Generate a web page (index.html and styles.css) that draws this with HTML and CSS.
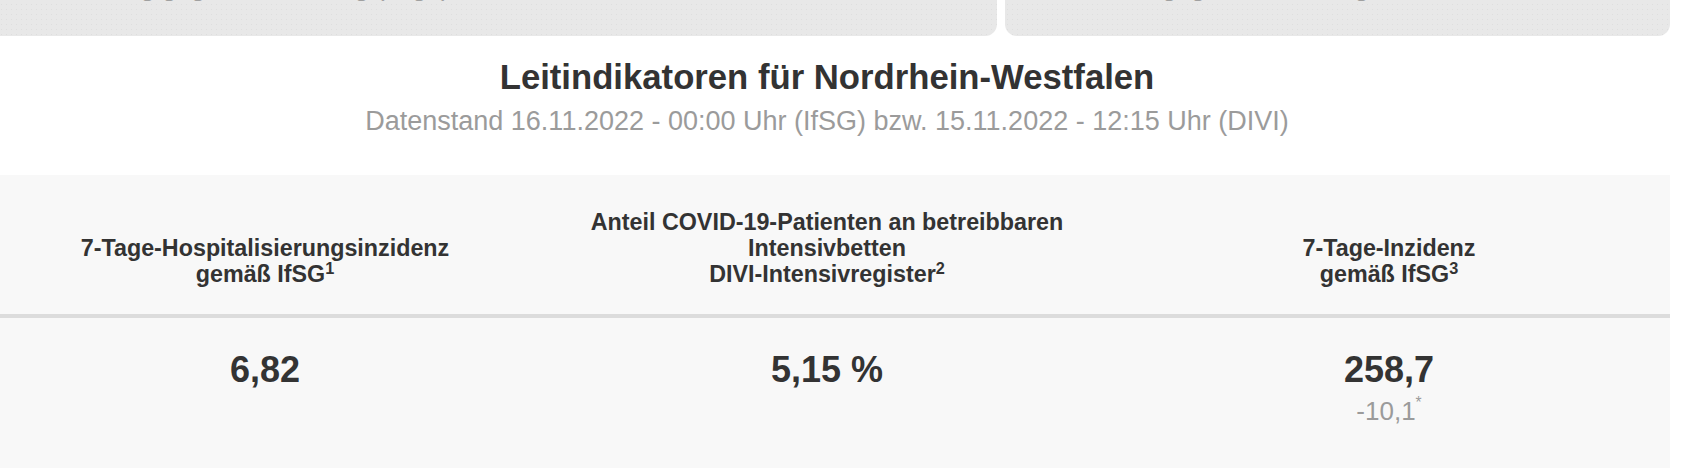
FILE: index.html
```html
<!DOCTYPE html>
<html lang="de">
<head>
<meta charset="utf-8">
<title>Leitindikatoren für Nordrhein-Westfalen</title>
<link rel="stylesheet" href="styles.css">
</head>
<body>
<div class="page">
  <div class="cards">
    <div class="card"><p class="card-text">Veränderung gegenüber Vortag (Tage)</p></div>
    <div class="card"><p class="card-text card-text-right">Stand gegenüber Vortag</p></div>
  </div>

  <header class="heading">
    <h2 class="title">Leitindikatoren für Nordrhein-Westfalen</h2>
    <p class="subtitle">Datenstand 16.11.2022 - 00:00 Uhr (IfSG) bzw. 15.11.2022 - 12:15 Uhr (DIVI)</p>
  </header>

  <div class="table">
    <div class="row head">
      <div class="cell"><span>7-Tage-Hospitalisierungsinzidenz</span><span>gemäß IfSG<sup>1</sup></span></div>
      <div class="cell"><span>Anteil COVID-19-Patienten an betreibbaren</span><span>Intensivbetten</span><span>DIVI-Intensivregister<sup>2</sup></span></div>
      <div class="cell"><span>7-Tage-Inzidenz</span><span>gemäß IfSG<sup>3</sup></span></div>
    </div>
    <div class="row body">
      <div class="cell"><span class="value">6,82</span></div>
      <div class="cell"><span class="value">5,15 %</span></div>
      <div class="cell"><span class="value">258,7</span><span class="delta">-10,1<sup>*</sup></span></div>
    </div>
  </div>
</div>
</body>
</html>
```

FILE: styles.css
```css
html, body {
  margin: 0;
  padding: 0;
  background: #ffffff;
  overflow: hidden;
}

body {
  font-family: "Liberation Sans", Arial, Helvetica, sans-serif;
  color: #333333;
}

.page {
  width: 1686px;
  margin-left: -16px;
  margin-top: -48px;
}

.cards {
  display: grid;
  grid-template-columns: 1013px 665px;
  column-gap: 8px;
}

.card {
  background-color: #e8e8e8;
  background-image: radial-gradient(#dedede 0.6px, transparent 0.8px);
  background-size: 5px 5px;
  border-radius: 12px;
  padding: 20px 24px 34px 22px;
}

.card-text {
  margin: 0;
  font-size: 26px;
  line-height: 30px;
  color: #a0a0a0;
}

.card-text-right {
  padding-left: 60px;
}

.heading {
  text-align: center;
  margin-top: 20px;
}

.title {
  margin: 0;
  font-size: 34.7px;
  line-height: 42px;
  font-weight: bold;
  color: #333333;
}

.subtitle {
  margin: 7px 0 0;
  font-size: 27px;
  line-height: 32px;
  color: #9b9b9b;
}

.table {
  margin-top: 38px;
  background-color: #f8f8f8;
}

.row {
  display: grid;
  grid-template-columns: repeat(3, 1fr);
}

.head {
  height: 143px;
  box-sizing: border-box;
  border-bottom: 4px solid #dcdcdc;
}

.head .cell {
  display: flex;
  flex-direction: column;
  justify-content: flex-end;
  align-items: center;
  padding-bottom: 27px;
  font-size: 23.3px;
  line-height: 26px;
  font-weight: bold;
  text-align: center;
}

sup {
  font-size: 0.7em;
  line-height: 0;
  vertical-align: 0.5em;
}

.body {
  height: 180px;
}

.body .cell {
  display: flex;
  flex-direction: column;
  align-items: center;
  padding-top: 30px;
}

.value {
  font-size: 36px;
  line-height: 43px;
  font-weight: bold;
  color: #333333;
}

.delta {
  margin-top: 5px;
  font-size: 26px;
  line-height: 31px;
  color: #9b9b9b;
}

.delta sup {
  font-size: 0.6em;
  vertical-align: 0.8em;
}
```
